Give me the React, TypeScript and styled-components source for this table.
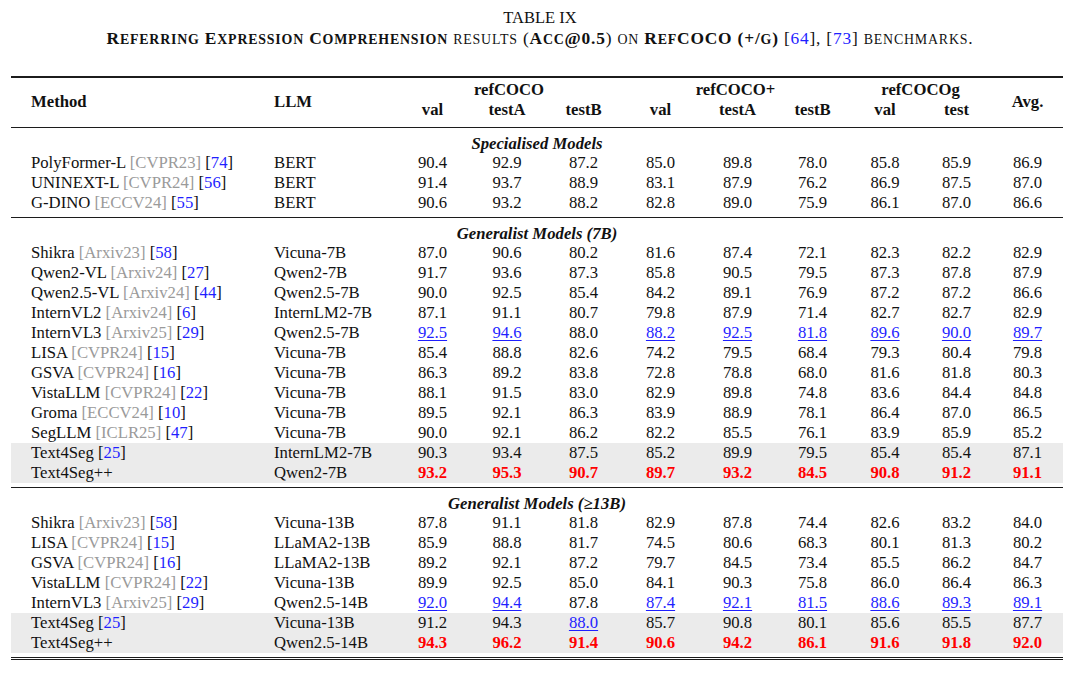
import React from "react";
import styled, { createGlobalStyle, css } from "styled-components";

const GlobalStyle = createGlobalStyle`
  html, body {
    margin: 0;
    padding: 0;
    background: #fff;
  }
  body {
    font-family: "Liberation Serif", "Times New Roman", serif;
    color: #111;
  }
`;

const Page = styled.div`
  width: 1080px;
  padding-top: 7px;
`;

const Caption = styled.div`
  text-align: center;
  line-height: 21px;
`;

const CaptionTitle = styled.div`
  font-size: 16.5px;
`;

const CaptionLine = styled.div`
  font-size: 17.4px;
  letter-spacing: 0.8px;
`;

// lowercase runs shown as small capitals
const Small = styled.span`
  font-size: 0.8em;
  text-transform: uppercase;
`;

const Strong = styled.b`
  font-weight: 700;
`;

const TableWrap = styled.div`
  padding: 26px 0 0 11px;
`;

const Table = styled.table`
  width: 1052px;
  table-layout: fixed;
  border-collapse: collapse;
  border-top: 2px solid #1c1c1c;
  border-bottom: 3px double #1c1c1c;
  font-size: 16.7px;
  line-height: 20px;
`;

const Col = styled.col<{ $w: number }>`
  width: ${(p) => p.$w}px;
`;

const Head = styled.thead`
  border-bottom: 1px solid #1c1c1c;
`;

const HeadRow = styled.tr<{ $first?: boolean }>`
  th {
    padding: ${(p) => (p.$first ? "2px 0 0" : "0 0 7px")};
  }
`;

const HeadCell = styled.th<{ $align?: "left" | "center"; $indent?: number; $tall?: boolean }>`
  font-weight: 700;
  text-align: ${(p) => p.$align ?? "center"};
  padding-left: ${(p) => p.$indent ?? 0}px !important;
  ${(p) =>
    p.$tall &&
    css`
      padding-bottom: 4px !important;
    `}
  vertical-align: middle;
  white-space: nowrap;
`;

const Section = styled.tbody`
  border-top: 1px solid #1c1c1c;
  &:first-of-type {
    border-top: none;
  }
`;

const SectionLabel = styled.td`
  padding: 6px 0 0;
  line-height: 19px;
  text-align: center;
  font-weight: 700;
  font-style: italic;
`;

const Spacer = styled.td`
  height: 4px;
  padding: 0;
`;

const Row = styled.tr<{ $shaded?: boolean }>`
  ${(p) =>
    p.$shaded &&
    css`
      background: #ebebeb;
    `}
  td {
    padding: 0;
    white-space: nowrap;
  }
`;

const MethodCell = styled.td`
  padding-left: 20px !important;
`;

const Venue = styled.span`
  color: #9a9a9a;
`;

const Cite = styled.span`
  color: #1f1fff;
`;

const NumCell = styled.td<{ $kind: "plain" | "under" | "best" }>`
  text-align: center;
  ${(p) =>
    p.$kind === "under" &&
    css`
      color: #1f1fff;
      text-decoration: underline;
      text-decoration-thickness: 1px;
      text-underline-offset: 2px;
    `}
  ${(p) =>
    p.$kind === "best" &&
    css`
      color: #f00;
      font-weight: 700;
    `}
`;

type Entry = {
  name: string;
  venue?: string;
  cite?: string;
  llm: string;
  vals: string[];
  shaded?: boolean;
};

type Group = { label: React.ReactNode; rows: Entry[] };

const v = (s: string) => s.split(" ");

const groups: Group[] = [
  {
    label: "Specialised Models",
    rows: [
      { name: "PolyFormer-L", venue: "[CVPR23]", cite: "74", llm: "BERT", vals: v("90.4 92.9 87.2 85.0 89.8 78.0 85.8 85.9 86.9") },
      { name: "UNINEXT-L", venue: "[CVPR24]", cite: "56", llm: "BERT", vals: v("91.4 93.7 88.9 83.1 87.9 76.2 86.9 87.5 87.0") },
      { name: "G-DINO", venue: "[ECCV24]", cite: "55", llm: "BERT", vals: v("90.6 93.2 88.2 82.8 89.0 75.9 86.1 87.0 86.6") },
    ],
  },
  {
    label: "Generalist Models (7B)",
    rows: [
      { name: "Shikra", venue: "[Arxiv23]", cite: "58", llm: "Vicuna-7B", vals: v("87.0 90.6 80.2 81.6 87.4 72.1 82.3 82.2 82.9") },
      { name: "Qwen2-VL", venue: "[Arxiv24]", cite: "27", llm: "Qwen2-7B", vals: v("91.7 93.6 87.3 85.8 90.5 79.5 87.3 87.8 87.9") },
      { name: "Qwen2.5-VL", venue: "[Arxiv24]", cite: "44", llm: "Qwen2.5-7B", vals: v("90.0 92.5 85.4 84.2 89.1 76.9 87.2 87.2 86.6") },
      { name: "InternVL2", venue: "[Arxiv24]", cite: "6", llm: "InternLM2-7B", vals: v("87.1 91.1 80.7 79.8 87.9 71.4 82.7 82.7 82.9") },
      { name: "InternVL3", venue: "[Arxiv25]", cite: "29", llm: "Qwen2.5-7B", vals: v("_92.5 _94.6 88.0 _88.2 _92.5 _81.8 _89.6 _90.0 _89.7") },
      { name: "LISA", venue: "[CVPR24]", cite: "15", llm: "Vicuna-7B", vals: v("85.4 88.8 82.6 74.2 79.5 68.4 79.3 80.4 79.8") },
      { name: "GSVA", venue: "[CVPR24]", cite: "16", llm: "Vicuna-7B", vals: v("86.3 89.2 83.8 72.8 78.8 68.0 81.6 81.8 80.3") },
      { name: "VistaLLM", venue: "[CVPR24]", cite: "22", llm: "Vicuna-7B", vals: v("88.1 91.5 83.0 82.9 89.8 74.8 83.6 84.4 84.8") },
      { name: "Groma", venue: "[ECCV24]", cite: "10", llm: "Vicuna-7B", vals: v("89.5 92.1 86.3 83.9 88.9 78.1 86.4 87.0 86.5") },
      { name: "SegLLM", venue: "[ICLR25]", cite: "47", llm: "Vicuna-7B", vals: v("90.0 92.1 86.2 82.2 85.5 76.1 83.9 85.9 85.2") },
      { name: "Text4Seg", cite: "25", llm: "InternLM2-7B", shaded: true, vals: v("90.3 93.4 87.5 85.2 89.9 79.5 85.4 85.4 87.1") },
      { name: "Text4Seg++", llm: "Qwen2-7B", shaded: true, vals: v("*93.2 *95.3 *90.7 *89.7 *93.2 *84.5 *90.8 *91.2 *91.1") },
    ],
  },
  {
    label: "Generalist Models (\u226513B)",
    rows: [
      { name: "Shikra", venue: "[Arxiv23]", cite: "58", llm: "Vicuna-13B", vals: v("87.8 91.1 81.8 82.9 87.8 74.4 82.6 83.2 84.0") },
      { name: "LISA", venue: "[CVPR24]", cite: "15", llm: "LLaMA2-13B", vals: v("85.9 88.8 81.7 74.5 80.6 68.3 80.1 81.3 80.2") },
      { name: "GSVA", venue: "[CVPR24]", cite: "16", llm: "LLaMA2-13B", vals: v("89.2 92.1 87.2 79.7 84.5 73.4 85.5 86.2 84.7") },
      { name: "VistaLLM", venue: "[CVPR24]", cite: "22", llm: "Vicuna-13B", vals: v("89.9 92.5 85.0 84.1 90.3 75.8 86.0 86.4 86.3") },
      { name: "InternVL3", venue: "[Arxiv25]", cite: "29", llm: "Qwen2.5-14B", vals: v("_92.0 _94.4 87.8 _87.4 _92.1 _81.5 _88.6 _89.3 _89.1") },
      { name: "Text4Seg", cite: "25", llm: "Vicuna-13B", shaded: true, vals: v("91.2 94.3 _88.0 85.7 90.8 80.1 85.6 85.5 87.7") },
      { name: "Text4Seg++", llm: "Qwen2.5-14B", shaded: true, vals: v("*94.3 *96.2 *91.4 *90.6 *94.2 *86.1 *91.6 *91.8 *92.0") },
    ],
  },
];

const widths = [263, 122, 73, 76, 77, 77, 77, 73, 72, 71, 71];

// splits text so lowercase runs become small capitals
const SmallCaps = ({ children }: { children: string }) => {
  const parts = children.match(/[a-z]+|[^a-z]+/g) ?? [];
  return (
    <>
      {parts.map((p, i) =>
        /[a-z]/.test(p[0]) ? <Small key={i}>{p}</Small> : <React.Fragment key={i}>{p}</React.Fragment>
      )}
    </>
  );
};

const Num = ({ raw }: { raw: string }) => {
  const kind = raw[0] === "_" ? "under" : raw[0] === "*" ? "best" : "plain";
  const text = kind === "plain" ? raw : raw.slice(1);
  return <NumCell $kind={kind}>{text}</NumCell>;
};

const App = () => {
  return (
    <Page>
      <GlobalStyle />
      <Caption>
        <CaptionTitle>TABLE IX</CaptionTitle>
        <CaptionLine>
          <Strong>
            <SmallCaps>Referring Expression Comprehension</SmallCaps>
          </Strong>{" "}
          <SmallCaps>results (</SmallCaps>
          <Strong>
            <SmallCaps>Acc@0.5</SmallCaps>
          </Strong>
          <SmallCaps>) on </SmallCaps>
          <Strong>
            <SmallCaps>RefCOCO (+/g)</SmallCaps>
          </Strong>{" "}
          [<Cite>64</Cite>], [<Cite>73</Cite>]{" "}
          <SmallCaps>benchmarks.</SmallCaps>
        </CaptionLine>
      </Caption>

      <TableWrap>
        <Table>
          <colgroup>
            {widths.map((w, i) => (
              <Col key={i} $w={w} />
            ))}
          </colgroup>
          <Head>
            <HeadRow $first>
              <HeadCell rowSpan={2} $align="left" $indent={20} $tall>
                Method
              </HeadCell>
              <HeadCell rowSpan={2} $align="left" $tall>
                LLM
              </HeadCell>
              <HeadCell colSpan={3}>refCOCO</HeadCell>
              <HeadCell colSpan={3}>refCOCO+</HeadCell>
              <HeadCell colSpan={2}>refCOCOg</HeadCell>
              <HeadCell rowSpan={2} $tall>
                Avg.
              </HeadCell>
            </HeadRow>
            <HeadRow>
              <HeadCell>val</HeadCell>
              <HeadCell>testA</HeadCell>
              <HeadCell>testB</HeadCell>
              <HeadCell>val</HeadCell>
              <HeadCell>testA</HeadCell>
              <HeadCell>testB</HeadCell>
              <HeadCell>val</HeadCell>
              <HeadCell>test</HeadCell>
            </HeadRow>
          </Head>

          {groups.map((g, gi) => (
            <Section key={gi}>
              <tr>
                <SectionLabel colSpan={11}>{g.label}</SectionLabel>
              </tr>
              {g.rows.map((r, ri) => (
                <Row key={ri} $shaded={r.shaded}>
                  <MethodCell>
                    {r.name}
                    {r.venue && <Venue> {r.venue}</Venue>}
                    {r.cite && (
                      <>
                        {" "}[<Cite>{r.cite}</Cite>]
                      </>
                    )}
                  </MethodCell>
                  <td>{r.llm}</td>
                  {r.vals.map((val, vi) => (
                    <Num key={vi} raw={val} />
                  ))}
                </Row>
              ))}
              <tr>
                <Spacer colSpan={11} />
              </tr>
            </Section>
          ))}
        </Table>
      </TableWrap>
    </Page>
  );
};

export default App;
